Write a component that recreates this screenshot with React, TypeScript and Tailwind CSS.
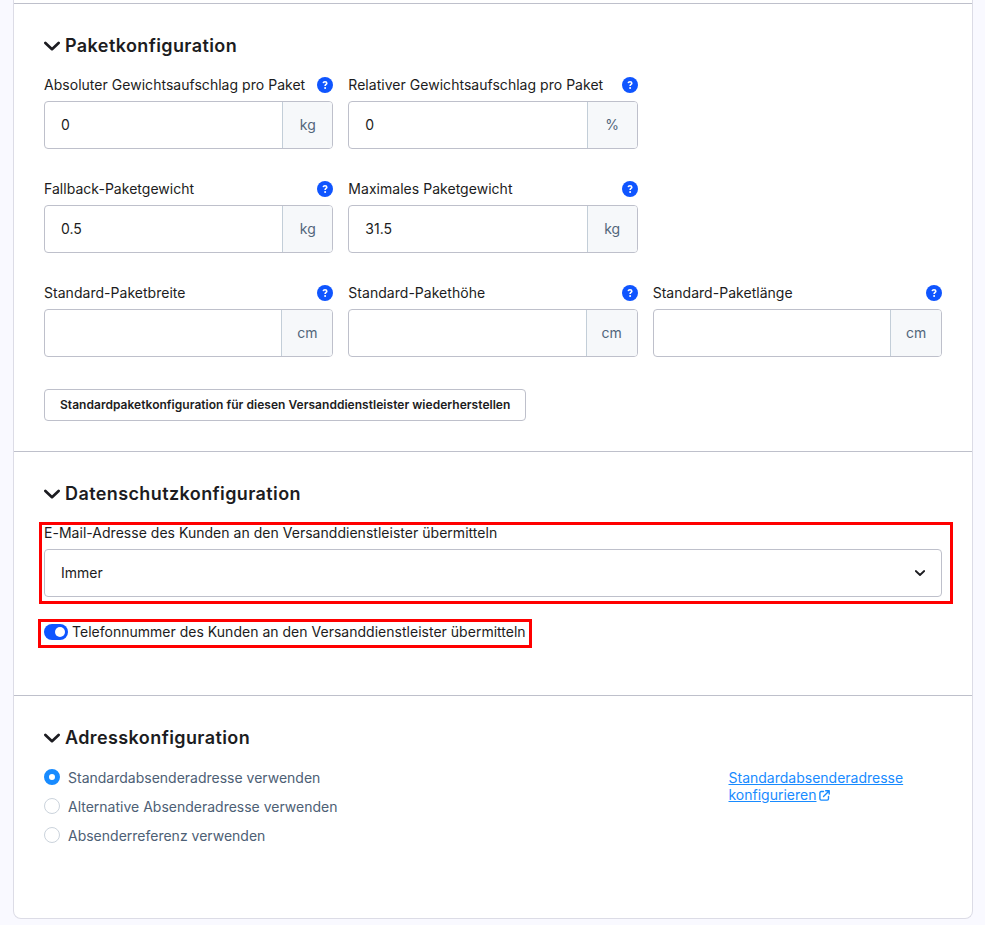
import { ReactNode } from "react";

interface FieldProps {
  label: string;
  unit: string;
  value?: string;
}

const HelpIcon = () => (
  <svg className="size-4 shrink-0" viewBox="0 0 16 16" fill="none">
    <circle cx="8" cy="8" r="8" fill="#0f55ff" />
    <path
      d="M6.2 6.1C6.4 5.2 7.1 4.800 8 4.800c1.100 0 1.800.6 1.800 1.400 0 1.200-1.700 1.200-1.700 2.700"
      stroke="#fff"
      strokeWidth="1.6"
    />
    <circle cx="8.1" cy="10.9" r="1" fill="#fff" />
  </svg>
);

const NumberField = ({ label, unit, value }: FieldProps) => (
  <div>
    <div className="flex h-4 items-center justify-between">
      <label className="tracking-[0.03px] whitespace-nowrap">{label}</label>
      <HelpIcon />
    </div>
    <div className="mt-2 flex h-12 overflow-hidden rounded border border-[#bec0cb]">
      <div className="flex flex-1 items-center px-4">{value}</div>
      <div className="flex items-center justify-center border-l border-[#c3ced8] bg-[#f6f8fa] px-[14.8px] text-[#52667a]">
        <span className="min-w-[19.4px] text-center">{unit}</span>
      </div>
    </div>
  </div>
);

const Heading = ({ children }: { children: ReactNode }) => (
  <h3 className="flex h-6 items-center gap-[5px] text-lg font-semibold tracking-[0.4px]">
    <svg className="size-4" viewBox="0 0 16 16" fill="none">
      <path
        d="M1.4 5 8 11.2 14.6 5"
        stroke="#1c1c21"
        strokeWidth="2.7"
        strokeLinecap="round"
        strokeLinejoin="round"
      />
    </svg>
    {children}
  </h3>
);

const Radio = ({ label, checked }: { label: string; checked?: boolean }) => (
  <div className="flex h-[17px] items-center gap-2">
    <span
      className={
        checked
          ? "-mt-px size-4 rounded-full border-5 border-[#188bff] bg-white"
          : "-mt-px size-4 rounded-full border border-[#cbd3dc] bg-white"
      }
    />
    <span>{label}</span>
  </div>
);

const App = () => {
  return (
    <div className="h-[925px] overflow-hidden bg-[#f9f9ff] pl-[13px] font-['Inter',sans-serif] text-sm text-[#1c1c21]">
      <div className="h-[919px] w-[960px] rounded-b-lg border-x border-b border-[#dcdce6] bg-white">
        <div className="h-1 border-b border-[#bec0cb]" />

        <section className="h-[448px] border-b border-[#bec0cb] px-[30px] pt-[30px]">
          <Heading>Paketkonfiguration</Heading>
          <div className="mt-[19px] grid grid-cols-3 gap-x-[15px] gap-y-8">
            <NumberField label="Absoluter Gewichtsaufschlag pro Paket" unit="kg" value="0" />
            <NumberField label="Relativer Gewichtsaufschlag pro Paket" unit="%" value="0" />
            <div />
            <NumberField label="Fallback-Paketgewicht" unit="kg" value="0.5" />
            <NumberField label="Maximales Paketgewicht" unit="kg" value="31.5" />
            <div />
            <NumberField label="Standard-Paketbreite" unit="cm" />
            <NumberField label="Standard-Pakethöhe" unit="cm" />
            <NumberField label="Standard-Paketlänge" unit="cm" />
          </div>
          <button className="mt-8 h-8 rounded border border-[#bec0cb] px-[15px] text-xs font-semibold tracking-[0.033px] whitespace-nowrap">
            Standardpaketkonfiguration für diesen Versanddienstleister wiederherstellen
          </button>
        </section>

        <section className="h-[244px] border-b border-[#bec0cb] px-[30px] pt-[30px]">
          <Heading>Datenschutzkonfiguration</Heading>
          <div className="relative mt-[19px]">
            <label className="flex h-4 items-center tracking-[0.025px]">
              E-Mail-Adresse des Kunden an den Versanddienstleister übermitteln
            </label>
            <div className="mt-2 flex h-12 items-center justify-between rounded border border-[#bec0cb] px-4">
              <span>Immer</span>
              <svg className="h-3 w-[10px]" viewBox="0 0 10 12" fill="none">
                <path
                  d="M.8 4 5 8 9.2 4"
                  stroke="#1c1c21"
                  strokeWidth="1.8"
                  strokeLinecap="round"
                  strokeLinejoin="round"
                />
              </svg>
            </div>
            <div className="absolute -top-[3px] -right-[11px] -bottom-[7px] -left-[5px] border-3 border-[#ff0000]" />
          </div>
          <div className="relative mt-[27px] flex h-4 w-fit items-center gap-1">
            <span className="flex h-4 w-6 items-center justify-end rounded-full bg-[#0f55ff] pr-[3px]">
              <span className="size-[10px] rounded-full bg-white" />
            </span>
            <span className="tracking-[0.015px] whitespace-nowrap">
              Telefonnummer des Kunden an den Versanddienstleister übermitteln
            </span>
            <div className="absolute -top-[5px] -right-[6px] -bottom-[8px] -left-[6px] border-3 border-[#ff0000]" />
          </div>
        </section>

        <section className="px-[30px] pt-[30px]">
          <Heading>Adresskonfiguration</Heading>
          <div className="mt-[19px] flex text-[#4d6075]">
            <div className="flex w-[684.5px] flex-col gap-3">
              <Radio label="Standardabsenderadresse verwenden" checked />
              <Radio label="Alternative Absenderadresse verwenden" />
              <Radio label="Absenderreferenz verwenden" />
            </div>
            <a className="w-[190px] leading-[17px] text-[#188bff]">
              <span className="underline">Standardabsenderadresse konfigurieren</span>
              <svg className="ml-[2px] inline-block size-[11px] align-[-1px]" viewBox="0 0 11 11" fill="none">
                <path
                  d="M4.5 1.500H2.200A1.300 1.300 0 0 0 .9 2.800v6A1.300 1.300 0 0 0 2.200 10.100h6A1.300 1.300 0 0 0 9.500 8.800V6.400M6.700.800H10.200v3.300M10 1 4.500 6.500"
                  stroke="currentColor"
                  strokeWidth="1.400"
                  strokeLinecap="round"
                  strokeLinejoin="round"
                />
              </svg>
            </a>
          </div>
        </section>
      </div>
    </div>
  );
};

export default App;
